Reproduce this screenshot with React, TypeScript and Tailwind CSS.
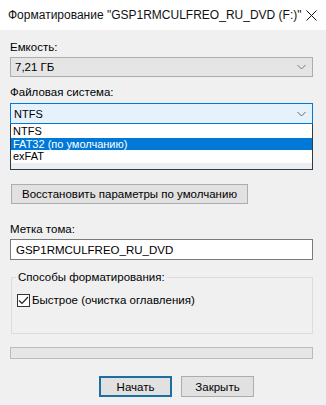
import React from "react";

function Chevron({ color = "#606060" }: { color?: string }) {
  return (
    <svg width="9" height="6" viewBox="0 0 9 6" fill="none">
      <path d="M0.5 1 L4.5 5 L8.5 1" stroke={color} strokeWidth="1" />
    </svg>
  );
}

export default function App() {
  return (
    <div className="w-[326px] h-[405px] bg-[#f0f0f0] overflow-hidden text-[11.5px] text-black font-['Liberation_Sans',sans-serif] whitespace-nowrap">
      <div className="h-[30px] bg-white flex items-center justify-between pl-[8px] pr-[9px]">
        <span className="text-[12px] leading-[20px] text-[#111]">
          Форматирование "GSP1RMCULFREO_RU_DVD (F:)"
        </span>
        <svg width="11" height="11" viewBox="0 0 11 11" fill="none">
          <path d="M0.5 0.5 L10.5 10.5 M10.5 0.5 L0.5 10.5" stroke="#111" strokeWidth="1" />
        </svg>
      </div>

      <div className="pl-[10px] pr-[13px]">
        <div className="mt-[9px] leading-[16px]">Емкость:</div>
        <div className="mt-[2px] h-[20px] border border-[#adadad] bg-[#e5e5e5] flex items-center justify-between pl-[4px] pr-[6px]">
          <span className="leading-[16px]">7,21 ГБ</span>
          <Chevron color="#777" />
        </div>

        <div className="mt-[7px] leading-[16px]">Файловая система:</div>
        <div className="relative mt-[3px]">
          <div className="h-[21px] border border-[#0078d7] bg-[#e5f1fb] flex items-center justify-between pl-[3px] pr-[6px]">
            <span className="leading-[16px] text-[11px]">NTFS</span>
            <Chevron color="#666" />
          </div>
          <div className="absolute left-0 right-0 top-full border border-t-0 border-[#2e3d46] bg-white text-[11px] leading-[13px]">
            <div className="pl-[2px] h-[14px] flex items-center">NTFS</div>
            <div className="pl-[2px] h-[12px] flex items-center bg-[#0078d7] text-white">FAT32 (по умолчанию)</div>
            <div className="pl-[2px] h-[13px] flex items-center">exFAT</div>
            <div className="h-[6px] bg-[#eceff0]"></div>
          </div>
        </div>

        <div className="mt-[60px] ml-[1px] w-[237px] h-[20px] border border-[#adadad] bg-[#e1e1e1] flex items-center justify-center leading-[16px]">
          Восстановить параметры по умолчанию
        </div>

        <div className="mt-[17px] leading-[16px]">Метка тома:</div>
        <div className="mt-[2px] h-[21px] border border-[#7a7a7a] bg-white flex items-center pl-[5px] leading-[16px]">
          GSP1RMCULFREO_RU_DVD
        </div>

        <fieldset className="mt-[9px] ml-[1px] border border-[#dcdcdc] pb-[25px]">
          <legend className="ml-[4px] px-[2px] leading-[16px]">Способы форматирования:</legend>
          <div className="mt-[7px] pl-[5px] flex items-center gap-[2px] leading-[16px]">
            <div className="w-[13px] h-[13px] border border-[#333] bg-white flex items-center justify-center">
              <svg width="11" height="9" viewBox="0 0 11 9" fill="none">
                <path d="M1 4.5 L4 7.5 L10 1" stroke="#222" strokeWidth="1.2" />
              </svg>
            </div>
            <span>Быстрое (очистка оглавления)</span>
          </div>
        </fieldset>

        <div className="mt-[13px] h-[12px] border border-[#bcbcbc] bg-[#e6e6e6]"></div>

        <div className="mt-[17px] ml-[89px] flex gap-[9px]">
          <div className="w-[73px] h-[21px] border-2 border-[#1e6fa0] bg-[#e1e1e1] flex items-center justify-center leading-[16px]">
            Начать
          </div>
          <div className="w-[73px] h-[21px] border border-[#adadad] bg-[#e1e1e1] flex items-center justify-center leading-[16px]">
            Закрыть
          </div>
        </div>
      </div>
    </div>
  );
}
